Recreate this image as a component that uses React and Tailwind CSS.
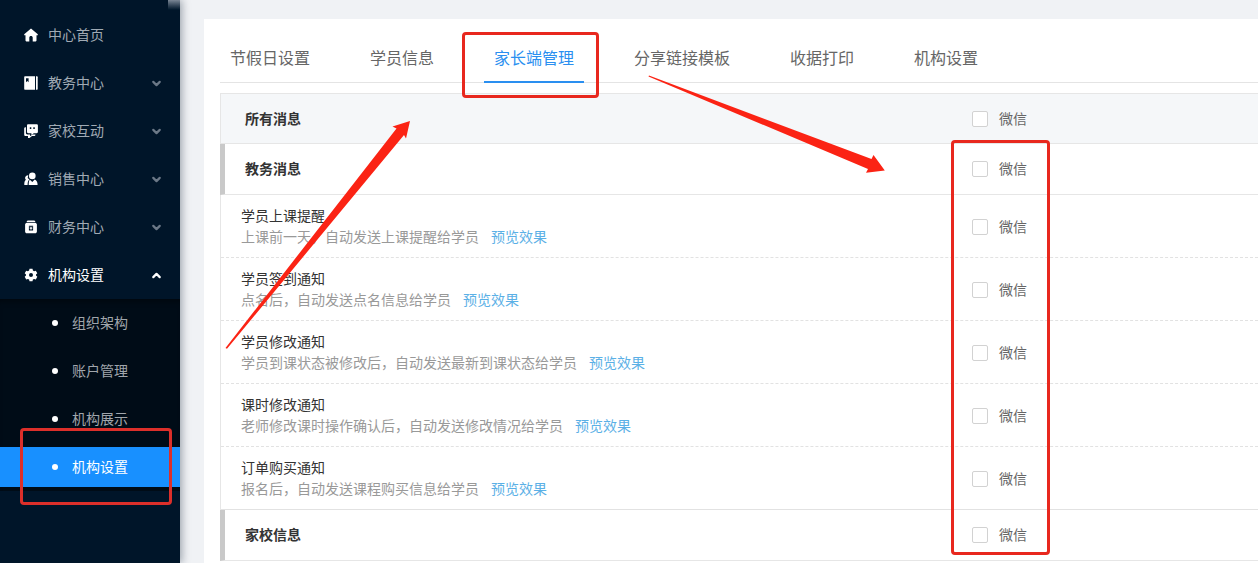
import React, { useState } from "react";
import { clsx } from "clsx";
import { ChevronDown, ChevronUp } from "lucide-react";

const HomeIcon = () => (
  <svg viewBox="0 0 14 14" className="w-[14px] h-[14px]" fill="currentColor">
    <path d="M7 .4 13.800 6.200v1.100h-1.300v5.300c0 .5-.3.800-.8.800H8.700V9.600c0-.9-.7-1.500-1.700-1.500s-1.700.6-1.700 1.500v3.800H2.300c-.5 0-.8-.3-.8-.8V7.300H.2V6.200z" />
  </svg>
);

const BookIcon = () => (
  <svg viewBox="0 0 14 14" className="w-[14px] h-[14px]" fill="currentColor">
    <path
      fillRule="evenodd"
      d="M1.200.2H11V13.800H1.200C.6 13.800.2 13.400.2 12.800V1.200C.2.600.6.200 1.200.2zM2 2.300V6.200L3.300 4.900 4.600 6.200V2.300z"
    />
    <path d="M12 .2h.7c.6 0 1 .4 1 1v11.600c0 .6-.4 1-1 1H12z" />
  </svg>
);

const ChatIcon = () => (
  <svg viewBox="0 0 14 14" className="w-[14px] h-[14px]" fill="currentColor">
    <path
      fillRule="evenodd"
      d="M4.200.2h8.400c.7 0 1.300.5 1.300 1.200v6.700c0 .7-.6 1.200-1.300 1.200H9.800L7.400 11V9.300H4.200C3.500 9.300 3 8.800 3 8.100V1.400C3 .7 3.500.2 4.200.2zM5.800 3.300v1.700h1.500V3.300zm3.500 0v1.700h1.500V3.300z"
    />
    <path d="M.2 4.500c0-.8.600-1.300 1.700-1.300V8.800c0 .9.600 1.600 1.500 1.600h2.700v1.800l2.300-1.700h3.100c-.1 1-.6 1.600-1.400 1.600H8L5.500 13.900H4V12.100H1.600C.8 12.100.2 11.500.2 10.700z" />
  </svg>
);

const PeopleIcon = () => (
  <svg viewBox="0 0 14 14" className="w-[14px] h-[14px]" fill="currentColor">
    <circle cx="8.300" cy="3.900" r="3.300" />
    <path d="M5.700 7.600 8.300 10 10.700 7.400c1.900.8 2.900 2.600 2.900 5.600H4.700c0-2 .2-3.900 1-5.400z" />
    <path d="M4.300 3.200C2.300 3.100.9 4.600 1.100 6.200c.1.700.4 1.200.9 1.600C.8 8.500.2 10.200.3 13h3.300c0-2.400.4-4.200 1.700-5.500L3.700 5.900z" />
  </svg>
);

const WalletIcon = () => (
  <svg viewBox="0 0 14 14" className="w-[14px] h-[14px]" fill="currentColor">
    <path d="M4.200.6h5.600c.9 0 1.400.6 1.700 1.600h-9C2.800 1.200 3.300.6 4.200.6z" />
    <path
      fillRule="evenodd"
      d="M2.800 2.900h8.400c1 0 1.700.7 1.700 1.700v6.900c0 1-.8 1.800-1.800 1.800H2.900c-1 0-1.800-.8-1.800-1.800V4.600c0-1 .7-1.700 1.700-1.700zM4.900 5.700v4.700h4.200V5.700zM5.700 6.300 7 7.300l1.300-1v1.300h-.8v.6h.8v.8h-.8v.7h-1v-.7h-.8v-.8h.8v-.6h-.8z"
    />
  </svg>
);

const GearIcon = () => (
  <svg viewBox="0 0 14 14" className="w-[14px] h-[14px]" fill="currentColor">
    <path
      fillRule="evenodd"
      d="M5.500.8h3l.4 1.700 1.200.7 1.700-.5 1.500 2.500L12 6.400v1.200l1.300 1.200-1.500 2.600-1.700-.5-1.200.7-.4 1.700h-3l-.4-1.700-1.200-.7-1.700.5L.7 8.800 2 7.600V6.400L.7 5.200l1.500-2.500 1.700.5 1.200-.7zM7 5a2 2 0 1 0 0 4A2 2 0 0 0 7 5z"
    />
  </svg>
);

const menus = [
  { name: "中心首页", icon: HomeIcon },
  { name: "教务中心", icon: BookIcon, arrow: true },
  { name: "家校互动", icon: ChatIcon, arrow: true },
  { name: "销售中心", icon: PeopleIcon, arrow: true },
  { name: "财务中心", icon: WalletIcon, arrow: true },
  { name: "机构设置", icon: GearIcon, arrow: true, open: true },
];

const subMenus = ["组织架构", "账户管理", "机构展示", "机构设置"];

const tabs = ["节假日设置", "学员信息", "家长端管理", "分享链接模板", "收据打印", "机构设置"];

const messages = [
  { title: "学员上课提醒", desc: "上课前一天，自动发送上课提醒给学员" },
  { title: "学员签到通知", desc: "点名后，自动发送点名信息给学员" },
  { title: "学员修改通知", desc: "学员到课状态被修改后，自动发送最新到课状态给学员" },
  { title: "课时修改通知", desc: "老师修改课时操作确认后，自动发送修改情况给学员" },
  { title: "订单购买通知", desc: "报名后，自动发送课程购买信息给学员" },
];

const Sidebar = () => {
  const [current, setCurrent] = useState(3);

  return (
    <aside className="relative z-10 w-[180px] shrink-0 bg-[#001529] pt-[15px] shadow-[2px_0_8px_rgba(0,21,41,0.35)]">
      <nav>
        <ul className="flex flex-col gap-2">
          {menus.map(({ name, icon: Icon, arrow, open }) => (
            <li key={name}>
              <button
                type="button"
                className={clsx(
                  "flex h-10 w-full items-center pl-6 pr-[17px] text-left",
                  open ? "text-white" : "text-[#a0aab4]"
                )}
              >
                <span className="mr-[10px] text-white">
                  <Icon />
                </span>
                <span className="flex-1">{name}</span>
                {arrow && !open && <ChevronDown size={13} strokeWidth={4} className="text-[#6b7887]" />}
                {open && <ChevronUp size={13} strokeWidth={4} />}
              </button>
            </li>
          ))}
        </ul>
        <ul className="mt-1 flex flex-col gap-2 bg-[#000c17] py-1 shadow-[inset_0_6px_6px_-4px_rgba(0,0,0,0.45)]">
          {subMenus.map((name, i) => (
            <li key={name}>
              <a
                href="#"
                onClick={() => setCurrent(i)}
                className={clsx(
                  "flex h-10 items-center gap-[14px] pl-[52px]",
                  i === current ? "bg-[#1890ff] text-white" : "text-[#a0a6ac]"
                )}
              >
                <span className="h-[6px] w-[6px] rounded-full bg-white" />
                {name}
              </a>
            </li>
          ))}
        </ul>
      </nav>
      <span className="absolute right-0 top-0 h-[10px] w-3 bg-linear-to-b from-[#7b8795] to-[#001529]" />
    </aside>
  );
};

const WechatCheck = () => (
  <label className="flex w-[286px] shrink-0 items-center gap-[11px] text-[#666666]">
    <input
      type="checkbox"
      className="h-4 w-4 appearance-none rounded-[2px] border border-[#d2d2d2] bg-white checked:bg-[#1890ff]"
    />
    微信
  </label>
);

const SectionRow = ({ title }) => (
  <div className="-ml-px flex h-[51px] items-center border-b border-l-[5px] border-b-[#e6e6e6] border-l-[#c9c9c9] pl-5">
    <h3 className="flex-1 font-bold text-[#333333]">{title}</h3>
    <WechatCheck />
  </div>
);

const App = () => {
  const [tab, setTab] = useState(2);

  return (
    <div className="relative flex min-h-screen overflow-hidden bg-[#f0f2f5] font-['Liberation_Sans','Noto_Sans_CJK_SC',sans-serif] text-sm">
      <Sidebar />

      <main className="ml-6 mt-[19px] min-w-0 flex-1 bg-white pl-4">
        <div className="flex h-16 gap-10 border-b border-[#e4e4e4] pt-[18px] text-base">
          {tabs.map((name, i) => (
            <button
              type="button"
              key={name}
              onClick={() => setTab(i)}
              className={clsx(
                "-mb-px shrink-0 border-b-2 px-[10px]",
                i === tab ? "border-[#2a8ff0] text-[#2a8ff0]" : "border-transparent text-[#666666]"
              )}
            >
              {name}
            </button>
          ))}
        </div>

        <section className="mt-[10px] border-l border-t border-[#e6e6e6]">
          <div className="flex h-[50px] items-center border-b border-[#e6e6e6] bg-[#f5f7f9] pl-6">
            <h2 className="flex-1 font-bold text-[#333333]">所有消息</h2>
            <WechatCheck />
          </div>
          <SectionRow title="教务消息" />
          <ul>
            {messages.map(({ title, desc }) => (
              <li
                key={title}
                className="flex items-center border-b border-dashed border-[#e2e2e2] pb-[9px] pl-5 pt-[11px] leading-[21px] last:border-solid"
              >
                <div className="flex-1">
                  <h4 className="text-[#333333]">{title}</h4>
                  <p className="text-[#999999]">
                    {desc}
                    <a href="#" className="ml-3 text-[#5bb0e6]">
                      预览效果
                    </a>
                  </p>
                </div>
                <WechatCheck />
              </li>
            ))}
          </ul>
          <SectionRow title="家校信息" />
        </section>
      </main>

      {/* guide marks */}
      <div className="pointer-events-none absolute left-5 top-[428px] z-20 h-[77px] w-[152px] rounded-[4px] border-3 border-[#dc2f2a]" />
      <div className="pointer-events-none absolute left-[462px] top-8 z-20 h-[66px] w-[137px] rounded-[4px] border-3 border-[#e8281e]" />
      <div className="pointer-events-none absolute left-[951px] top-[140px] z-20 h-[415px] w-[99px] rounded-[4px] border-3 border-[#e8281e]" />
      <svg
        viewBox="0 0 1258 563"
        className="pointer-events-none absolute left-0 top-0 z-20 h-[563px] w-[1258px]"
        fill="#fb2314"
      >
        <path d="M225.500 348 396.500 128.500 392.500 126.500 410 121 406 138.500 404 135 227 348.800z" />
        <path d="M649 75.500 871.500 159 873.500 155 884.800 170.500 866 172.700 868 169 648.500 76.500z" />
      </svg>
    </div>
  );
};

export default App;
